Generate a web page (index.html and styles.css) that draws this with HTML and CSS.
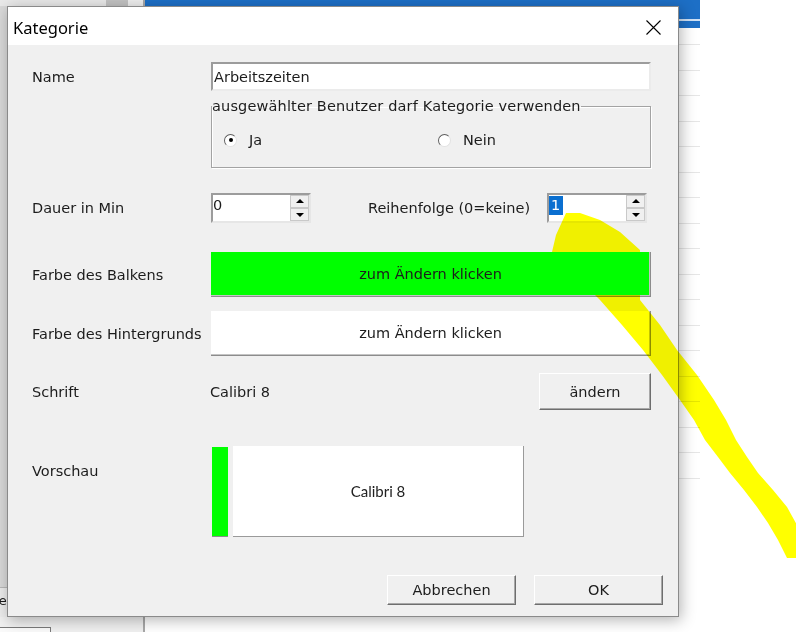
FILE: index.html
```html
<!DOCTYPE html>
<html lang="de">
	<head>
		<meta charset="UTF-8" />
		<title>Kategorie</title>
		<link rel="stylesheet" href="styles.css">
	</head>

	<body>
		<div class="desk">
			<div class="pane pane-left">
				<div class="strip">
					<span class="strip-a"></span>
					<span class="strip-b"></span>
					<span class="strip-c"></span>
				</div>
				<div class="pane-left-body"></div>
				<div class="new-btn">Neu</div>
				<div class="pane-left-foot"><span class="foot-box"></span></div>
			</div>
			<div class="pane-divider"></div>
			<div class="pane pane-mid">
				<div class="mid-head"><span class="mid-head-line"></span></div>
				<div class="mid-gap"></div>
				<div class="mid-rows">
					<div class="mid-row"></div><div class="mid-row"></div><div class="mid-row"></div>
					<div class="mid-row"></div><div class="mid-row"></div><div class="mid-row"></div>
					<div class="mid-row"></div><div class="mid-row"></div><div class="mid-row"></div>
					<div class="mid-row"></div><div class="mid-row"></div><div class="mid-row"></div>
					<div class="mid-row"></div><div class="mid-row"></div><div class="mid-row"></div>
					<div class="mid-row"></div><div class="mid-row"></div><div class="mid-row"></div>
				</div>
			</div>
			<div class="pane pane-right"></div>
		</div>

		<div class="dialog">
			<div class="dialog-title">
				<span class="dialog-caption">Kategorie</span>
				<svg class="dialog-close" width="15" height="15" viewBox="0 0 15 15">
					<path d="M0.5 0.5 L14.5 14.5 M14.5 0.5 L0.5 14.5" stroke="#000" stroke-width="1.1" fill="none" />
				</svg>
			</div>

			<div class="dialog-body">
				<div class="form-row form-row_name">
					<span class="label">Name</span>
					<div class="textbox textbox_name">Arbeitszeiten</div>
				</div>

				<div class="form-row form-row_group">
					<span class="label"></span>
					<fieldset class="group">
						<legend class="group-legend">ausgewählter Benutzer darf Kategorie verwenden</legend>
						<div class="group-options">
							<span class="option option_first"><span class="radio radio_checked"></span>Ja</span>
							<span class="option"><span class="radio"></span>Nein</span>
						</div>
					</fieldset>
				</div>

				<div class="form-row form-row_spin">
					<span class="label">Dauer in Min</span>
					<div class="control-line">
						<div class="spin">
							<span class="spin-value">0</span>
							<span class="spin-buttons"><span class="spin-up"></span><span class="spin-down"></span></span>
						</div>
						<span class="spin-label">Reihenfolge (0=keine)</span>
						<div class="spin">
							<span class="spin-value spin-value_selected">1</span>
							<span class="spin-buttons"><span class="spin-up"></span><span class="spin-down"></span></span>
						</div>
					</div>
				</div>

				<div class="form-row form-row_bar">
					<span class="label">Farbe des Balkens</span>
					<div class="color-button color-button_green">zum Ändern klicken</div>
				</div>

				<div class="form-row form-row_back">
					<span class="label">Farbe des Hintergrunds</span>
					<div class="color-button color-button_white">zum Ändern klicken</div>
				</div>

				<div class="form-row form-row_font">
					<span class="label">Schrift</span>
					<div class="control-line control-line_font">
						<span class="font-name">Calibri 8</span>
						<div class="button button_change">ändern</div>
					</div>
				</div>

				<div class="form-row form-row_preview">
					<span class="label label_top">Vorschau</span>
					<div class="preview">
						<span class="preview-bar"></span>
						<div class="preview-box">Calibri 8</div>
					</div>
				</div>

				<div class="dialog-footer">
					<div class="button button_footer">Abbrechen</div>
					<div class="button button_footer">OK</div>
				</div>
			</div>
		</div>

		<svg class="marker" width="796" height="632" viewBox="0 0 796 632">
			<polygon fill="#ffff00" points="566,213 556,235 552,252 575,275 600,300 622,325 643,350 662,375 680,400 694,420 705,440 718,457 730,473 744,490 757,507 768,523 778,540 787,558 797,558 797,525 787,507 773,490 758,473 747,457 736,440 726,420 714,400 697,375 677,350 660,325 640,300 640,275 640,250 620,232 600,220 580,213" />
		</svg>
	</body>
</html>
```

FILE: styles.css
```css
html {
	box-sizing: border-box;
}

*,
*::after,
*::before {
	box-sizing: inherit;
}

body {
	position: relative;
	margin: 0;
	width: 796px;
	height: 632px;
	overflow: hidden;
	background-color: #ffffff;
	font-family: "DejaVu Sans", sans-serif;
	font-size: 14.5px;
	color: #1c1c1c;
}

/* background application */

.desk {
	display: grid;
	grid-template-columns: 143px 2px 555px 1fr;
	height: 632px;
}

.pane {
	display: flex;
	flex-direction: column;
	min-width: 0;
}

.pane-left {
	background-color: #dedede;
}

.strip {
	display: flex;
	height: 6px;
}

.strip-a {
	width: 106px;
	background-color: #e9e9e9;
}

.strip-b {
	width: 22px;
	background-color: #c2c2c2;
}

.strip-c {
	flex-grow: 1;
	background-color: #eeeeee;
}

.pane-left-body {
	height: 581px;
	background-color: #d9d9d9;
}

.new-btn {
	height: 30px;
	margin-left: -11px;
	padding-top: 5px;
	border-top: 1px solid #b8b8b8;
	background-color: #ececec;
	font-size: 13px;
}

.pane-left-foot {
	flex-grow: 1;
	padding-top: 10px;
	background-color: #f0f0f0;
}

.foot-box {
	display: block;
	width: 51px;
	height: 10px;
	background-color: #fafafa;
	border-top: 1px solid #7a7a7a;
	border-right: 1px solid #7a7a7a;
}

.pane-divider {
	background-color: #a8a8a8;
}

.pane-mid {
	background-color: #ffffff;
}

.mid-head {
	height: 28px;
	padding-top: 19px;
	background-color: #1d6fc6;
}

.mid-head-line {
	display: block;
	height: 2px;
	background-color: #cfe1f5;
}

.mid-gap {
	height: 16px;
}

.mid-row {
	height: 25.5px;
	border-top: 1px solid #e6e6e6;
}

.pane-right {
	background-color: #ffffff;
}

/* dialog */

.dialog {
	position: absolute;
	left: 7px;
	top: 6px;
	width: 672px;
	height: 611px;
	display: flex;
	flex-direction: column;
	border: 1px solid #8a8a8a;
	background-color: #f0f0f0;
	box-shadow: 2px 3px 14px rgb(0 0 0 / 30%);
}

.dialog-title {
	display: flex;
	align-items: center;
	justify-content: space-between;
	height: 38px;
	padding: 2px 17px 0 5px;
	background-color: #ffffff;
	font-family: "Noto Sans", sans-serif;
	font-size: 16.5px;
	color: #000000;
}

.dialog-close {
	display: block;
}

.dialog-body {
	flex-grow: 1;
	padding: 17px 0 0 24px;
}

.form-row {
	display: grid;
	grid-template-columns: 179px 440px;
	align-items: center;
}

.form-row_name {
	height: 29px;
}

.form-row_group {
	margin-top: 7px;
}

.form-row_spin {
	height: 30px;
	margin-top: 25px;
}

.form-row_bar {
	height: 45px;
	margin-top: 29px;
}

.form-row_back {
	height: 45px;
	margin-top: 14px;
}

.form-row_font {
	height: 36px;
	margin-top: 17px;
}

.form-row_preview {
	height: 90px;
	margin-top: 38px;
	align-items: start;
}

.label {
	white-space: nowrap;
}

.label_top {
	padding-top: 16px;
}

.textbox {
	height: 29px;
	padding: 0 1px;
	line-height: 27px;
	background-color: #ffffff;
	border: 2px solid;
	border-color: #9c9c9c #ebebeb #ebebeb #9c9c9c;
}

.group {
	height: 70px;
	margin: 0;
	padding: 18px 0 0 0;
	border: 1px solid #a3a3a3;
	box-shadow: 1px 1px 0 #ffffff, inset 1px 1px 0 #ffffff;
}

.group-legend {
	padding: 0;
	line-height: 16px;
	letter-spacing: 0.15px;
}

.group-options {
	display: flex;
	align-items: center;
	height: 16px;
	padding-left: 12px;
}

.option {
	display: flex;
	align-items: center;
	gap: 12px;
}

.option_first {
	width: 214px;
}

.radio {
	position: relative;
	width: 13px;
	height: 13px;
	border-radius: 50%;
	background-color: #ffffff;
	border: 1px solid;
	border-color: #5e5e5e #e2e2e2 #e2e2e2 #5e5e5e;
}

.radio_checked::after {
	content: "";
	position: absolute;
	left: 3.5px;
	top: 3.5px;
	width: 4px;
	height: 4px;
	border-radius: 50%;
	background-color: #000000;
}

.control-line {
	display: flex;
	align-items: center;
}

.spin {
	display: flex;
	justify-content: space-between;
	flex-shrink: 0;
	width: 100px;
	height: 30px;
	background-color: #ffffff;
	border: 2px solid;
	border-color: #9c9c9c #e6e6e6 #e6e6e6 #9c9c9c;
}

.spin-value {
	align-self: flex-start;
	margin-top: 1px;
	padding: 0 2px 0 0;
	line-height: 19px;
}

.spin-value_selected {
	padding: 0 3px 0 2px;
	background-color: #0a6fd0;
	color: #ffffff;
}

.spin-buttons {
	display: flex;
	flex-direction: column;
	width: 19px;
}

.spin-up,
.spin-down {
	position: relative;
	flex-grow: 1;
	background-color: #f0f0f0;
	border: 1px solid #c9c9c9;
}

.spin-up::after,
.spin-down::after {
	content: "";
	position: absolute;
	left: 5px;
	border-left: 4px solid transparent;
	border-right: 4px solid transparent;
}

.spin-up::after {
	top: 3px;
	border-bottom: 4px solid #000000;
}

.spin-down::after {
	top: 4px;
	border-top: 4px solid #000000;
}

.spin-label {
	flex-shrink: 0;
	width: 179px;
	margin-left: 57px;
	white-space: nowrap;
}

.color-button {
	display: flex;
	align-items: center;
	justify-content: center;
	height: 45px;
	border-right: 1px solid #8c8c8c;
	border-bottom: 1px solid #8c8c8c;
	box-shadow: inset -1px -1px 0 #c4c4c4;
}

.color-button_green {
	background-color: #00ff00;
}

.color-button_white {
	background-color: #ffffff;
}

.control-line_font {
	justify-content: space-between;
}

.font-name {
	margin-left: -1px;
}

.button {
	display: flex;
	align-items: center;
	justify-content: center;
	background-color: #f0f0f0;
	border: 1px solid;
	border-color: #ffffff #6e6e6e #6e6e6e #ffffff;
	box-shadow: inset -1px -1px 0 #a8a8a8;
}

.button_change {
	width: 112px;
	height: 37px;
}

.preview {
	display: flex;
	gap: 5px;
	height: 90px;
	padding-left: 1px;
}

.preview-bar {
	width: 16px;
	height: 90px;
	background-color: #00ff00;
	border-bottom: 1px solid #8c8c8c;
}

.preview-box {
	display: flex;
	align-items: center;
	justify-content: center;
	width: 291px;
	height: 91px;
	margin-top: -1px;
	background-color: #ffffff;
	border-right: 1px solid #9a9a9a;
	border-bottom: 1px solid #9a9a9a;
	font-family: "Lato", sans-serif;
	font-size: 15px;
	color: #222222;
}

.dialog-footer {
	display: flex;
	justify-content: flex-end;
	gap: 18px;
	margin-top: 38px;
	padding-right: 15px;
}

.button_footer {
	width: 129px;
	height: 30px;
}

.marker {
	position: absolute;
	left: 0;
	top: 0;
	pointer-events: none;
	mix-blend-mode: multiply;
}
```
